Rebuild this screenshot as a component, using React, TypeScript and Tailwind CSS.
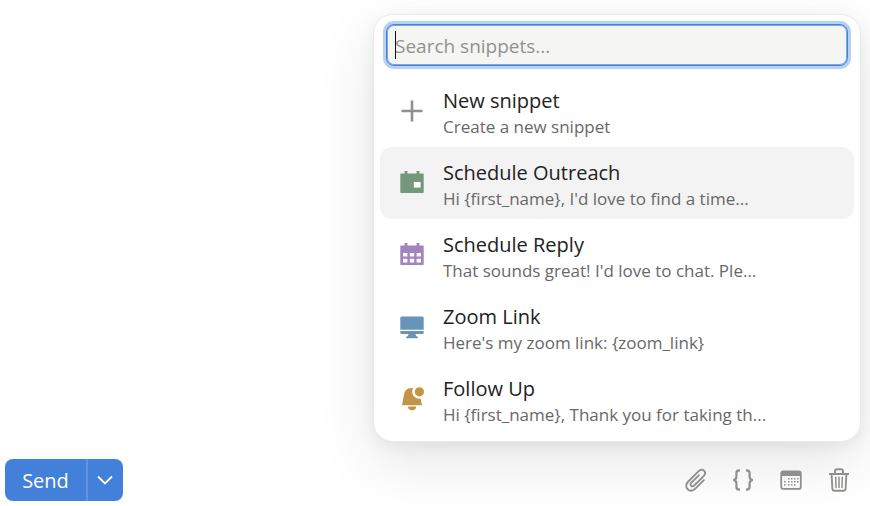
import { useState, type ReactNode } from 'react';

interface Snippet {
  title: string;
  preview: string;
  icon: ReactNode;
}

function PlusIcon() {
  return (
    <svg width="24" height="24" viewBox="0 0 24 24" fill="#8f8f8b" aria-hidden="true">
      <path d="M10.7 1.5h2.6v9.2h9.200v2.600h-9.200v9.200h-2.600v-9.200H1.500v-2.600h9.200z" />
    </svg>
  );
}

function OutreachIcon() {
  return (
    <svg width="24" height="24" viewBox="0 0 24 24" aria-hidden="true">
      <path
        fill="#74987c"
        d="M4.6 0h2.8v2.500h9.200V0h2.800v2.500H23a.7.7 0 0 1 .7.7v18.100a.7.7 0 0 1-.7.7H1a.7.7 0 0 1-.7-.7V3.200a.7.7 0 0 1 .7-.7h3.600z"
      />
      <path fill="#fff" d="M13.8 11h6.800v5.600h-6.800z" />
    </svg>
  );
}

function ReplyIcon() {
  return (
    <svg width="24" height="24" viewBox="0 0 24 24" aria-hidden="true">
      <path
        fill="#a083bf"
        d="M4.6 0h2.8v2.500h9.200V0h2.800v2.500H23a.7.7 0 0 1 .7.7v18.100a.7.7 0 0 1-.7.7H1a.7.7 0 0 1-.7-.7V3.200a.7.7 0 0 1 .7-.7h3.600z"
      />
      <path
        fill="#fff"
        d="M3 10h4.400v3.600H3zM9.800 10h4.400v3.600H9.800zM16.600 10H21v3.600h-4.400zM3 15.800h4.400v3.600H3zM9.800 15.800h4.400v3.600H9.800zM16.600 15.800H21v3.600h-4.400z"
      />
    </svg>
  );
}

function ScreenIcon() {
  return (
    <svg width="24" height="24" viewBox="0 0 24 24" fill="#6794b8" aria-hidden="true">
      <path d="M1.800 1.500h20.400A1.500 1.500 0 0 1 23.700 3v11.800H.300V3a1.500 1.500 0 0 1 1.500-1.500zM.300 16h23.400v1.500a1.500 1.500 0 0 1-1.500 1.500h-6.700c0 1.500.8 2.500 2.400 2.800v1.500H6.100v-1.500C7.700 21.500 8.500 20.500 8.500 19H1.800a1.500 1.500 0 0 1-1.500-1.500z" />
    </svg>
  );
}

function BellIcon() {
  return (
    <svg width="24" height="24" viewBox="0 0 24 24" fill="#c29545" aria-hidden="true">
      <circle cx="19.400" cy="4.800" r="4.600" />
      <path d="M13.200 1.200a7 7 0 0 0 7.300 10.400l1.500 6.600H2L4 7.600C4.900 3 7.600 1.200 10.600 1.200zM8 19.600h8.200a4.100 3.800 0 0 1-8.200 0z" />
    </svg>
  );
}

function PaperclipIcon() {
  return (
    <svg
      width="24"
      height="24"
      viewBox="0 0 24 24"
      fill="none"
      stroke="#8f8f8d"
      strokeWidth="1.9"
      strokeLinecap="round"
      aria-hidden="true"
    >
      <path d="M20.800 12.200l-8.200 8.200c-2.500 2.500-5.500 3.100-7.900.9-2.200-2.200-1.900-5.300.6-7.800L15.600 3.200c1.900-1.900 4-1.900 5.400-.5 1.500 1.500 1.500 3.500-.4 5.400l-9.400 9.400c-1.100 1.100-2.300 1.100-3.100.3-.8-.8-.8-2 .3-3.100l7.400-7.400" />
    </svg>
  );
}

function BracesIcon() {
  return (
    <svg width="24" height="24" viewBox="0 0 24 24" fill="none" stroke="#8f8f8d" strokeWidth="2.2" aria-hidden="true">
      <path d="M9 2.400h-.8C6.300 2.400 5.400 3.300 5.400 5.200v3.600c0 1.900-.9 2.900-3.200 3.200 2.300.3 3.200 1.300 3.200 3.200v3.600c0 1.900.9 2.800 2.800 2.800H9" />
      <path d="M15 2.400h.8c1.900 0 2.800.9 2.800 2.800v3.600c0 1.900.9 2.900 3.200 3.200-2.300.3-3.200 1.300-3.200 3.200v3.600c0 1.900-.9 2.800-2.800 2.800H15" />
    </svg>
  );
}

function CalendarIcon() {
  return (
    <svg width="24" height="24" viewBox="0 0 24 24" fill="#8f8f8d" aria-hidden="true">
      <rect x="2.2" y="3.3" width="19.6" height="17.6" rx="2" fill="none" stroke="#8f8f8d" strokeWidth="1.8" />
      <path d="M2 4h20v4H2z" />
      <path d="M9 10h1.500v1.500H9zM12 10h1.500v1.500H12zM15 10h1.500v1.500H15zM18 10h1.500v1.500H18zM5 13h1.500v1.500H5zM9 13h1.500v1.500H9zM12 13h1.500v1.500H12zM15 13h1.500v1.500H15zM18 13h1.500v1.500H18zM5 16h1.500v1.500H5zM9 16h1.500v1.500H9zM12 16h1.500v1.500H12zM15 16h1.500v1.500H15z" />
    </svg>
  );
}

function TrashIcon() {
  return (
    <svg width="24" height="24" viewBox="0 0 24 24" fill="none" stroke="#8f8f8d" aria-hidden="true">
      <path
        strokeWidth="1.9"
        d="M2 6h20M8 5.600V3.500C8 2 8.800 1.200 10.200 1.200h3.600c1.400 0 2.200.8 2.200 2.300v2.100M4.600 6l.8 15.200c.1 1 .7 1.600 1.700 1.600h9.800c1 0 1.600-.6 1.700-1.600L19.400 6"
      />
      <path strokeWidth="1.5" strokeLinecap="round" d="M8.700 9.200l.3 10.400M12 9.200v10.400M15.300 9.200L15 19.600" />
    </svg>
  );
}

const snippets: Snippet[] = [
  { title: 'New snippet', preview: 'Create a new snippet', icon: <PlusIcon /> },
  { title: 'Schedule Outreach', preview: "Hi {first_name}, I'd love to find a time...", icon: <OutreachIcon /> },
  { title: 'Schedule Reply', preview: "That sounds great! I'd love to chat. Ple...", icon: <ReplyIcon /> },
  { title: 'Zoom Link', preview: "Here's my zoom link: {zoom_link}", icon: <ScreenIcon /> },
  { title: 'Follow Up', preview: 'Hi {first_name}, Thank you for taking th...', icon: <BellIcon /> },
];

const tools = [
  { label: 'Attach file', icon: <PaperclipIcon /> },
  { label: 'Snippets', icon: <BracesIcon /> },
  { label: 'Calendar', icon: <CalendarIcon /> },
  { label: 'Delete draft', icon: <TrashIcon /> },
];

export default function App() {
  const [query, setQuery] = useState('');
  const [active, setActive] = useState(1);

  return (
    <div className="overflow-hidden bg-white pt-3.5 pb-1 font-['Open_Sans','Liberation_Sans',sans-serif]">
      <div className="flex justify-end pr-[9px] pl-4">
        <div className="w-full max-w-[488px] rounded-[20px] border border-[#ebebeb] bg-white p-1.5 shadow-[0_20px_60px_rgba(0,0,0,0.10),0_4px_16px_rgba(0,0,0,0.06)]">
          <div className="relative mx-1.5 mt-[3px] mb-[9px]">
            <input
              type="text"
              aria-label="Search snippets"
              placeholder="Search snippets..."
              value={query}
              onChange={(e) => setQuery(e.target.value)}
              className="block h-[42px] w-full rounded-lg border border-[#4482db] bg-[#f5f5f3] px-2 pt-0.5 text-[19px] text-[#222] caret-transparent ring-3 ring-[#b8d1f3] inset-ring inset-ring-[#7ba7e6] outline-none placeholder:text-[#92928e]"
            />
            {query === '' && <span className="absolute top-[7px] left-[9px] h-7 w-px bg-[#111]" />}
          </div>
          <ul>
            {snippets.map((s, i) => (
              <li key={s.title}>
                <button
                  type="button"
                  onMouseEnter={() => setActive(i)}
                  className={`flex h-[72px] w-full items-center gap-[19px] rounded-xl px-5 text-left ${i === active ? 'bg-[#f3f3f3]' : ''}`}
                >
                  {s.icon}
                  <span className="flex min-w-0 flex-col pt-1">
                    <span className="truncate text-[20px] leading-7 text-[#222]">{s.title}</span>
                    <span className="truncate text-[17px] leading-6 text-[#686868]">{s.preview}</span>
                  </span>
                </button>
              </li>
            ))}
          </ul>
        </div>
      </div>

      <div className="mt-[17px] flex items-center justify-between pr-[7px] pl-[5px]">
        <div className="relative flex h-[42px] overflow-hidden rounded-lg bg-[#4380d9] text-white">
          <button type="button" className="w-[81px] pt-0.5 text-[20px]">
            Send
          </button>
          <button
            type="button"
            aria-label="More send options"
            className="flex w-[37px] items-center justify-center border-l-2 border-[#5f94e0] pr-0.5"
          >
            <svg width="16" height="10" viewBox="0 0 16 10" fill="none" stroke="currentColor" strokeWidth="1.8" aria-hidden="true">
              <path d="M1 1.500l7 7 7-7" />
            </svg>
          </button>
        </div>
        <div className="relative flex">
          {tools.map((t) => (
            <button key={t.label} type="button" aria-label={t.label} className="flex h-10 w-12 items-center justify-center">
              {t.icon}
            </button>
          ))}
        </div>
      </div>
    </div>
  );
}
